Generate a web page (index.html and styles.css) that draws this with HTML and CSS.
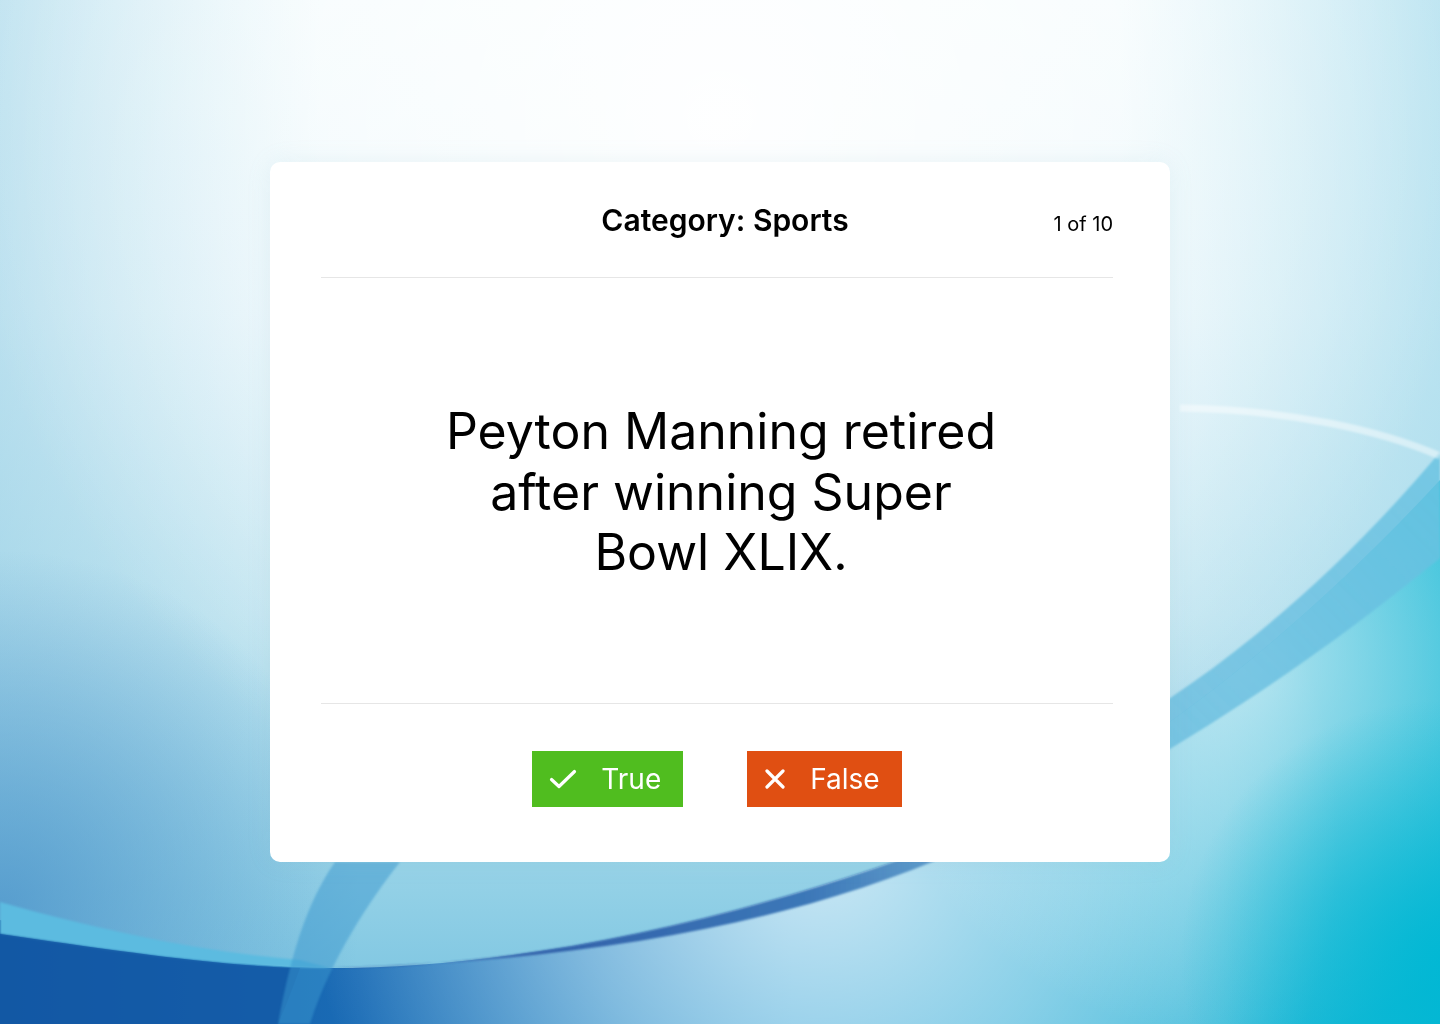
FILE: index.html
```html
<!DOCTYPE html>
<html lang="en">
<head>
<meta charset="utf-8">
<title>Quiz</title>
<link rel="stylesheet" href="styles.css">
</head>
<body>
<svg class="backdrop" viewBox="0 0 1440 1024" preserveAspectRatio="none" aria-hidden="true">
  <defs>
    <linearGradient id="sky" x1="0" y1="0" x2="0" y2="1">
      <stop offset="0" stop-color="#f2fbfd"/>
      <stop offset="0.3" stop-color="#e6f5fa"/>
      <stop offset="0.6" stop-color="#c4e6f1"/>
      <stop offset="0.85" stop-color="#96d2e7"/>
      <stop offset="1" stop-color="#78c3e0"/>
    </linearGradient>
    <radialGradient id="glow" cx="720" cy="120" r="760" gradientUnits="userSpaceOnUse">
      <stop offset="0" stop-color="#ffffff" stop-opacity="0.95"/>
      <stop offset="0.45" stop-color="#ffffff" stop-opacity="0.6"/>
      <stop offset="1" stop-color="#ffffff" stop-opacity="0"/>
    </radialGradient>
    <linearGradient id="leftShade" x1="0" y1="0" x2="1" y2="0">
      <stop offset="0" stop-color="#86c7e1" stop-opacity="0.45"/>
      <stop offset="1" stop-color="#86c7e1" stop-opacity="0"/>
    </linearGradient>
    <linearGradient id="rightShade" x1="1" y1="0" x2="0" y2="0">
      <stop offset="0" stop-color="#a6dbec" stop-opacity="0.7"/>
      <stop offset="1" stop-color="#a6dbec" stop-opacity="0"/>
    </linearGradient>
    <radialGradient id="lowerLeft" cx="0" cy="910" r="360" gradientUnits="userSpaceOnUse">
      <stop offset="0" stop-color="#4a92c9" stop-opacity="0.8"/>
      <stop offset="1" stop-color="#4a92c9" stop-opacity="0"/>
    </radialGradient>
    <linearGradient id="belowBase" x1="0" y1="0" x2="1440" y2="0" gradientUnits="userSpaceOnUse">
      <stop offset="0" stop-color="#0d4f9c"/>
      <stop offset="0.25" stop-color="#1a6cb6"/>
      <stop offset="0.55" stop-color="#3aa6d8"/>
      <stop offset="0.85" stop-color="#3bbad9"/>
      <stop offset="1" stop-color="#0cb5d3"/>
    </linearGradient>
    <radialGradient id="belowHi" cx="820" cy="840" r="520" gradientUnits="userSpaceOnUse">
      <stop offset="0" stop-color="#ffffff" stop-opacity="0.75"/>
      <stop offset="0.5" stop-color="#ffffff" stop-opacity="0.4"/>
      <stop offset="1" stop-color="#ffffff" stop-opacity="0"/>
    </radialGradient>
    <radialGradient id="rightHi" cx="1240" cy="660" r="380" gradientUnits="userSpaceOnUse">
      <stop offset="0" stop-color="#eaf6fa" stop-opacity="0.7"/>
      <stop offset="1" stop-color="#eaf6fa" stop-opacity="0"/>
    </radialGradient>
    <radialGradient id="cyanCorner" cx="1440" cy="960" r="260" gradientUnits="userSpaceOnUse">
      <stop offset="0" stop-color="#00b8d4" stop-opacity="0.9"/>
      <stop offset="1" stop-color="#00b8d4" stop-opacity="0"/>
    </radialGradient>
    <linearGradient id="band" x1="0" y1="1" x2="1" y2="0">
      <stop offset="0" stop-color="#62b8dd" stop-opacity="0.7"/>
      <stop offset="1" stop-color="#6ac3e2" stop-opacity="0.85"/>
    </linearGradient>
    <linearGradient id="darkBand" x1="0" y1="0" x2="1" y2="0">
      <stop offset="0" stop-color="#2a4f9e"/>
      <stop offset="0.6" stop-color="#3c78b8"/>
      <stop offset="1" stop-color="#5ea6d2" stop-opacity="0.5"/>
    </linearGradient>
    <filter id="soft" x="-10%" y="-10%" width="120%" height="120%">
      <feGaussianBlur stdDeviation="1.2"/>
    </filter>
  </defs>
  <rect width="1440" height="1024" fill="url(#sky)"/>
  <rect width="320" height="1024" fill="url(#leftShade)"/>
  <rect x="1120" width="320" height="1024" fill="url(#rightShade)"/>
  <rect width="1440" height="1024" fill="url(#glow)"/>
  <rect width="1440" height="1024" fill="url(#lowerLeft)"/>
  <!-- region below the big arc -->
  <path d="M0 920 C120 950 230 966 330 968 C560 968 800 900 980 830 C1150 760 1320 610 1440 480 L1440 1024 L0 1024 Z" fill="url(#belowBase)"/>
  <path d="M0 920 C120 950 230 966 330 968 C560 968 800 900 980 830 C1150 760 1320 610 1440 480 L1440 1024 L0 1024 Z" fill="url(#belowHi)"/>
  <path d="M0 920 C120 950 230 966 330 968 C560 968 800 900 980 830 C1150 760 1320 610 1440 480 L1440 1024 L0 1024 Z" fill="url(#rightHi)"/>
  <path d="M0 920 C120 950 230 966 330 968 C560 968 800 900 980 830 C1150 760 1320 610 1440 480 L1440 1024 L0 1024 Z" fill="url(#cyanCorner)"/>
  <!-- upper right band -->
  <path d="M1100 740 C1230 670 1350 560 1440 452 L1440 558 C1340 640 1240 710 1100 790 Z" fill="url(#band)" filter="url(#soft)"/>
  <path d="M1180 408 C1290 410 1380 430 1440 456" stroke="#ffffff" stroke-opacity="0.45" stroke-width="7" fill="none" filter="url(#soft)"/>
  <!-- light band at lower left -->
  <path d="M0 902 C100 930 200 952 300 960 L330 968 C220 968 110 950 0 934 Z" fill="#5cbbe0" filter="url(#soft)"/>
  <!-- darker left region below arc -->
  <path d="M0 934 C110 950 220 966 300 968 C292 990 285 1008 278 1024 L0 1024 Z" fill="#145aa6" opacity="0.8"/>
  <!-- vertical swoosh -->
  <path d="M278 1024 C290 960 305 905 335 862 L400 862 C370 900 330 960 310 1024 Z" fill="#3a98cf" opacity="0.5" filter="url(#soft)"/>
  <!-- thin dark band -->
  <path d="M330 968 C560 968 800 900 980 830 C1030 810 1080 780 1130 745 C1080 785 1030 815 960 850 C780 930 560 962 330 968 Z" fill="url(#darkBand)" filter="url(#soft)"/>
</svg>

<main class="card">
  <header class="card-head">
    <span class="spacer"></span>
    <h1 class="category">Category: Sports</h1>
    <span class="counter">1 of 10</span>
  </header>
  <section class="question">
    <p>Peyton Manning retired after winning Super Bowl XLIX.</p>
  </section>
  <footer class="answers">
    <button class="btn btn-true" type="button">
      <svg class="icon-check" viewBox="0 0 28 20" width="28" height="20" aria-hidden="true"><path d="M2.5 10.5 L10 17.5 L25.5 2.5" fill="none" stroke="#fff" stroke-width="3.2" stroke-linecap="round" stroke-linejoin="round"/></svg>
      <span>True</span>
    </button>
    <button class="btn btn-false" type="button">
      <svg class="icon-x" viewBox="0 0 22 20" width="22" height="20" aria-hidden="true"><path d="M3 2 L19 18 M19 2 L3 18" fill="none" stroke="#fff" stroke-width="3.2" stroke-linecap="round"/></svg>
      <span>False</span>
    </button>
  </footer>
</main>
</body>
</html>
```

FILE: styles.css
```css
* { box-sizing: border-box; }

html, body {
  margin: 0;
  height: 100%;
}

body {
  font-family: Inter, "Noto Sans", "Liberation Sans", sans-serif;
  color: #000;
  min-height: 1024px;
  display: flex;
  align-items: center;
  justify-content: center;
  position: relative;
  overflow: hidden;
}

.backdrop {
  position: fixed;
  inset: 0;
  width: 100%;
  height: 100%;
  z-index: 0;
}

.card {
  position: relative;
  z-index: 1;
  width: 900px;
  height: 700px;
  background: #fff;
  border-radius: 10px;
  padding: 0 57px 0 51px;
  display: flex;
  flex-direction: column;
  box-shadow: 0 0 24px rgba(120, 180, 200, 0.12);
}

.card-head {
  height: 116px;
  border-bottom: 1px solid #e6e6e6;
  display: grid;
  grid-template-columns: 1fr auto 1fr;
  align-items: baseline;
  padding: 39px 0 0 16px;
}

.category {
  margin: 0;
  font-size: 30px;
  font-weight: 600;
  line-height: 38px;
}

.counter {
  justify-self: end;
  font-size: 20px;
  font-weight: 400;
}

.question {
  flex: 1;
  display: flex;
  align-items: center;
  justify-content: center;
  border-bottom: 1px solid #e6e6e6;
  padding-left: 8px;
}

.question p {
  margin: 0;
  max-width: 566px;
  text-align: center;
  font-size: 50px;
  line-height: 60.5px;
  font-weight: 400;
  padding-top: 3px;
}

.answers {
  height: 158px;
  padding-top: 47px;
  display: flex;
  justify-content: center;
  align-items: flex-start;
  gap: 64px;
}

.btn {
  height: 56px;
  border: 0;
  border-radius: 0;
  padding: 0 22px 0 17px;
  display: flex;
  align-items: center;
  gap: 24px;
  color: #fff;
  font-family: inherit;
  font-size: 28px;
  font-weight: 400;
  cursor: pointer;
}

.btn-true { background: #50bd1f; }
.btn-false { background: #e04f12; }

.btn svg { display: block; flex: none; }
```
